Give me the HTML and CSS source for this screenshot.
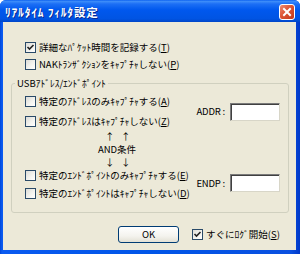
FILE: index.html
```html
<!DOCTYPE html>
<html lang="ja">
<head>
<meta charset="utf-8">
<link rel="stylesheet" href="styles.css">
</head>
<body>
<div class="window">
  <div class="titlebar">
    <span class="title">ﾘｱﾙﾀｲﾑ ﾌｨﾙﾀ設定</span>
    <span class="close"><svg width="10" height="10" viewBox="0 0 10 10"><path d="M2 2 L8 8 M8 2 L2 8" stroke="#fff" stroke-width="2" stroke-linecap="square"/></svg></span>
  </div>
  <div class="client">
    <div class="top-opts">
      <div class="cb-row"><span class="cb"><svg class="tick" width="9" height="9" viewBox="0 0 9 9"><path d="M1.5 4 L3.5 6 L7.5 2" fill="none" stroke="#222" stroke-width="1.6"/></svg></span><span class="lbl">詳細なﾊﾟｹｯﾄ時間を記録する(<u>T</u>)</span></div>
      <div class="cb-row"><span class="cb"></span><span class="lbl">NAKﾄﾗﾝｻﾞｸｼｮﾝをｷｬﾌﾟﾁｬしない(<u>P</u>)</span></div>
    </div>
    <fieldset class="group">
      <legend>USBｱﾄﾞﾚｽ/ｴﾝﾄﾞﾎﾟｲﾝﾄ</legend>
      <div class="pair pair-addr">
        <div class="rows rows-addr">
          <div class="cb-row"><span class="cb"></span><span class="lbl">特定のｱﾄﾞﾚｽのみｷｬﾌﾟﾁｬする(<u>A</u>)</span></div>
          <div class="cb-row"><span class="cb"></span><span class="lbl">特定のｱﾄﾞﾚｽはｷｬﾌﾟﾁｬしない(<u>Z</u>)</span></div>
        </div>
        <div class="field"><span class="flabel">ADDR :</span><span class="input"></span></div>
      </div>
      <div class="and">
        <div class="arrows"><span>↑</span><span>↑</span></div>
        <div class="andtxt">AND条件</div>
        <div class="arrows"><span>↓</span><span>↓</span></div>
      </div>
      <div class="pair pair-endp">
        <div class="rows rows-endp">
          <div class="cb-row"><span class="cb"></span><span class="lbl">特定のｴﾝﾄﾞﾎﾟｲﾝﾄのみｷｬﾌﾟﾁｬする(<u>E</u>)</span></div>
          <div class="cb-row"><span class="cb"></span><span class="lbl">特定のｴﾝﾄﾞﾎﾟｲﾝﾄはｷｬﾌﾟﾁｬしない(<u>D</u>)</span></div>
        </div>
        <div class="field field-endp"><span class="flabel">ENDP :</span><span class="input"></span></div>
      </div>
    </fieldset>
    <div class="bottom">
      <button class="btn" type="button">OK</button>
      <div class="cb-row"><span class="cb"><svg class="tick" width="9" height="9" viewBox="0 0 9 9"><path d="M1.5 4 L3.5 6 L7.5 2" fill="none" stroke="#222" stroke-width="1.6"/></svg></span><span class="lbl">すぐにﾛｸﾞ開始(<u>S</u>)</span></div>
    </div>
  </div>
</div>
</body>
</html>
```

FILE: styles.css
```css
* { box-sizing: border-box; }
html, body { margin: 0; padding: 0; }
body {
  width: 300px;
  height: 254px;
  overflow: hidden;
  background: #fff;
  font-family: "Noto Sans CJK JP", "Noto Sans", sans-serif;
  font-size: 9.5px;
  color: #000;
}
.window {
  width: 300px;
  height: 254px;
  display: flex;
  flex-direction: column;
  background: linear-gradient(90deg, #0046D8 0, #0A5AF0 2px, #0055E8 50%, #0A50E0 97%, #0038C8 100%);
  border-radius: 6px 6px 0 0;
  overflow: hidden;
}
.titlebar {
  height: 22px;
  flex: none;
  display: flex;
  align-items: center;
  justify-content: space-between;
  padding: 1px 5px 0 5px;
  background: linear-gradient(#0A5FF0 0%, #3D8DF9 6%, #1C6FF5 18%, #0058EE 45%, #0054E3 85%, #0046C8 100%);
}
.title {
  color: #fff;
  font-weight: bold;
  font-size: 11.5px;
  letter-spacing: 0.8px;
  line-height: 14px;
  text-shadow: 1px 1px 0 #0A2A90;
}
.close {
  width: 16px;
  height: 16px;
  border: 1px solid #fff;
  border-radius: 3px;
  background: linear-gradient(135deg, #EE8C74 0%, #DC5434 45%, #C2381A 100%);
  display: flex;
  align-items: center;
  justify-content: center;
}
.client {
  flex: 1;
  margin: 0 4px 4px 3px;
  background: #ECE9D8;
  display: flex;
  flex-direction: column;
}
.top-opts {
  padding: 20px 0 0 22px;
  display: flex;
  flex-direction: column;
  gap: 6px;
}
.cb-row {
  display: flex;
  align-items: center;
  height: 11px;
  gap: 3px;
}
.cb {
  width: 11px;
  height: 11px;
  flex: none;
  border: 1px solid #2A4A68;
  background: linear-gradient(135deg, #DCDCD7 0%, #F4F4F0 60%, #FFFFFF 100%);
  display: flex;
  align-items: center;
  justify-content: center;
}
.lbl {
  line-height: 11px;
  white-space: nowrap;
}
u { text-decoration-thickness: 1px; text-underline-offset: 1px; }
.group {
  margin: 8px 7px 0 8px;
  padding: 0 8px 13px 3px;
  border: 1px solid #D0D0BF;
  border-radius: 3px;
  min-width: 0;
}
.group legend {
  padding: 0 2px;
  line-height: 11px;
  height: 11px;
  color: #000;
}
.pair {
  display: flex;
  align-items: center;
  justify-content: space-between;
  padding-left: 10px;
}
.pair-addr { margin-top: 7px; }
.rows {
  display: flex;
  flex-direction: column;
}
.rows-addr { gap: 9px; }
.rows-endp { gap: 7px; }
.field {
  display: flex;
  align-items: center;
  gap: 5px;
}
.field-endp { margin-top: -3px; }
.flabel {
  line-height: 11px;
  white-space: nowrap;
  letter-spacing: -0.2px;
}
.input {
  width: 50px;
  height: 18px;
  background: #fff;
  border: 1px solid;
  border-color: #7A7A7A #D8D6C8 #D8D6C8 #7A7A7A;
  box-shadow: inset 1px 1px 0 #404040;
}
.and {
  margin: 3px 0 1px 84px;
  width: 36px;
  display: flex;
  flex-direction: column;
  align-items: center;
  white-space: nowrap;
}
.andtxt { line-height: 13px; }
.arrows {
  display: flex;
  gap: 8px;
  line-height: 13px;
}
.arrows span { width: 8px; text-align: center; }
.bottom {
  display: flex;
  align-items: center;
  padding: 13px 0 0 115px;
  gap: 13px;
}
.btn {
  width: 61px;
  height: 17px;
  padding: 0;
  font: inherit;
  line-height: 11px;
  color: #000;
  border: 1px solid #003C74;
  border-radius: 3px;
  background: linear-gradient(#FFFFFF 0%, #F4F3EE 60%, #E3E1D5 100%);
}
```
